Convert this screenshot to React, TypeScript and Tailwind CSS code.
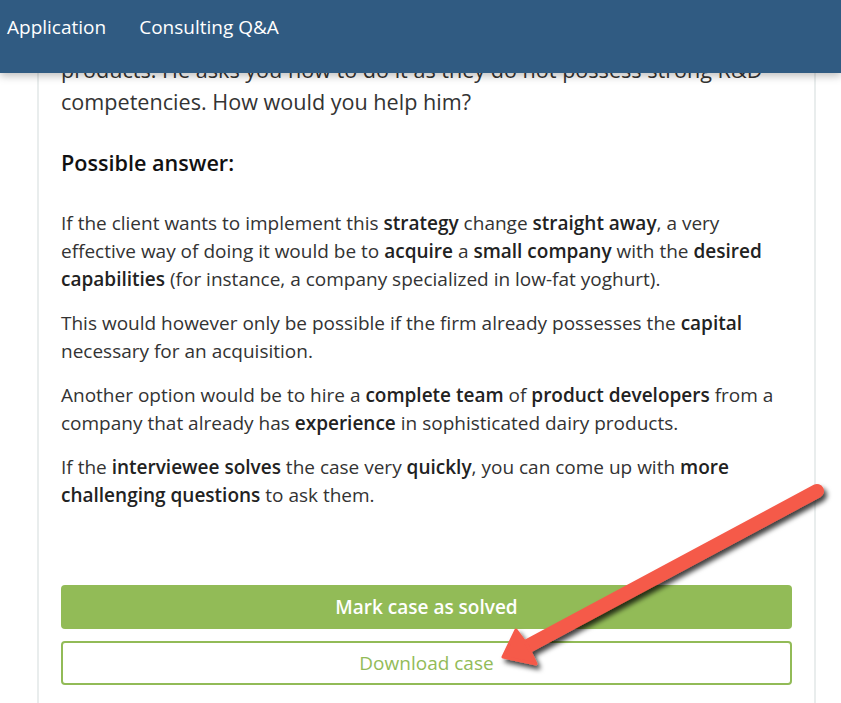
import React from "react";

const font = { fontFamily: '"Open Sans", "Liberation Sans", sans-serif' };

function B({ children }: { children: React.ReactNode }) {
  return <strong className="font-semibold text-[#222]">{children}</strong>;
}

export default function App() {
  return (
    <div className="relative w-[841px] h-[703px] overflow-hidden bg-white" style={font}>
      {/* top nav */}
      <header className="absolute top-0 left-0 right-0 z-10 h-[73px] bg-[#305b82] shadow-[0_3px_8px_rgba(0,0,0,0.25)]">
        <nav className="flex gap-[33px] pl-[7px] pt-[13px] text-[19px] text-white">
          <span>Application</span>
          <span>Consulting Q&amp;A</span>
        </nav>
      </header>

      {/* case card */}
      <div className="ml-[37px] w-[779px] h-full border-x-2 border-[#e9eded] px-[22px] pt-[54px] text-[#333]">
        <p className="text-[21.6px] leading-[32px]">
          products. He asks you how to do it as they do not possess strong R&amp;D competencies. How would you help him?
        </p>

        <h3 className="mt-[31px] text-[21.6px] leading-[28px] font-semibold text-[#111]">Possible answer:</h3>

        <div className="mt-[32px] text-[19px] leading-[28px] flex flex-col gap-4">
          <p>
            If the client wants to implement this <B>strategy</B> change <B>straight away</B>, a very effective way of
            doing it would be to <B>acquire</B> a <B>small company</B> with the <B>desired capabilities</B> (for
            instance, a company specialized in low-fat yoghurt).
          </p>
          <p>
            This would however only be possible if the firm already possesses the <B>capital</B> necessary for an
            acquisition.
          </p>
          <p>
            Another option would be to hire a <B>complete team</B> of <B>product developers</B> from a company that
            already has <B>experience</B> in sophisticated dairy products.
          </p>
          <p>
            If the <B>interviewee solves</B> the case very <B>quickly</B>, you can come up with <B>more challenging
            questions</B> to ask them.
          </p>
        </div>

        <div className="mt-[76px] flex flex-col gap-3">
          <button className="h-[44px] w-full rounded bg-[#92bb57] text-[19px] font-semibold text-white">
            Mark case as solved
          </button>
          <button className="h-[44px] w-full rounded border-2 border-[#92bb57] bg-white text-[19px] text-[#92bb57]">
            Download case
          </button>
        </div>
      </div>

      {/* annotation arrow */}
      <svg className="absolute inset-0 z-20 pointer-events-none" width="841" height="703">
        <defs>
          <filter id="sh" x="-20%" y="-20%" width="140%" height="140%">
            <feDropShadow dx="3" dy="4" stdDeviation="2.5" floodColor="#000" floodOpacity="0.75" />
          </filter>
        </defs>
        <g filter="url(#sh)">
          <line x1="817" y1="491" x2="528" y2="646" stroke="#f55a4a" strokeWidth="14" strokeLinecap="round" />
          <path d="M503 657 L516 630 L527 645 L536 664 Z" fill="#f55a4a" stroke="#f55a4a" strokeWidth="3" strokeLinejoin="round" />
        </g>
      </svg>
    </div>
  );
}
